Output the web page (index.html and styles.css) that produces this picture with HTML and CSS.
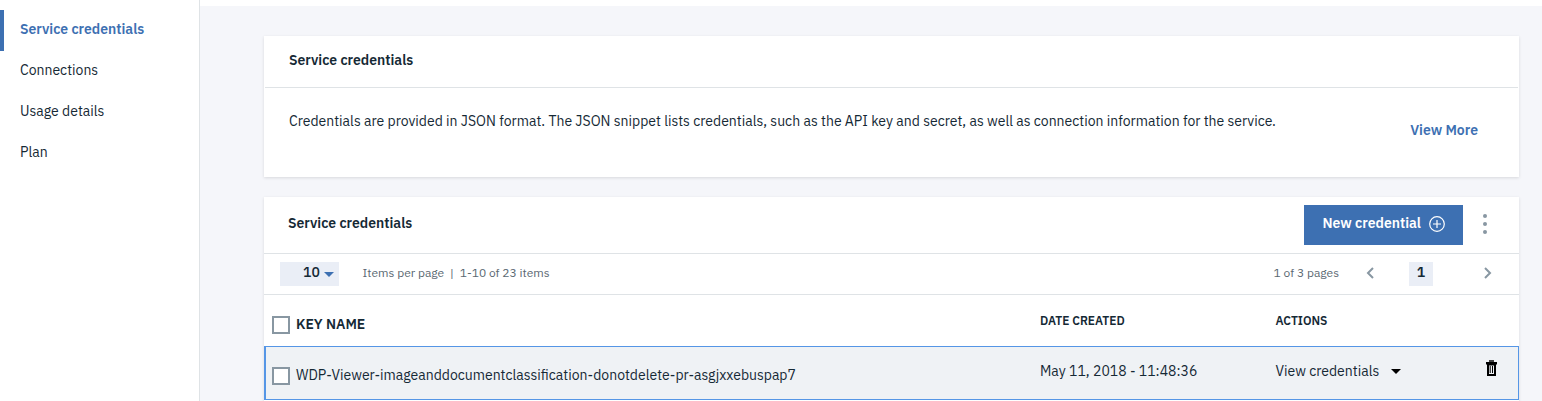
FILE: index.html
```
<!DOCTYPE html>
<html lang="en">
<head>
<meta charset="utf-8">
<title>Service credentials</title>
<link rel="stylesheet" href="styles.css">
</head>
<body>
<nav class="sidebar">
  <a class="nav-item active">Service credentials</a>
  <a class="nav-item">Connections</a>
  <a class="nav-item">Usage details</a>
  <a class="nav-item">Plan</a>
</nav>
<main class="main">
  <section class="card intro">
    <header class="intro-head"><h2 class="title">Service credentials</h2></header>
    <div class="intro-body">
      <p class="desc">Credentials are provided in JSON format. The JSON snippet lists credentials, such as the API key and secret, as well as connection information for the service.</p>
      <a class="more">View More</a>
    </div>
  </section>
  <section class="card list">
    <header class="toolbar">
      <h2 class="title">Service credentials</h2>
      <button class="primary"><span>New credential</span>
        <svg width="16" height="16" viewBox="0 0 16 16" fill="none" stroke="#fff" stroke-width="1.2"><circle cx="8" cy="8" r="7.3"/><path d="M8 4v8M4 8h8"/></svg>
      </button>
      <svg class="overflow" width="4" height="20" viewBox="0 0 4 20" fill="#8897a2"><circle cx="2" cy="2" r="2"/><circle cx="2" cy="10" r="2"/><circle cx="2" cy="18" r="2"/></svg>
    </header>
    <div class="pager">
      <div class="size"><span>10</span><svg width="10" height="5" viewBox="0 0 10 5"><path d="M0 0h10L5 5z" fill="#3d70b2"/></svg></div>
      <span class="small ipp">Items per page</span><span class="small bar">|</span><span class="small">1-10 of 23 items</span>
      <span class="small pages">1 of 3 pages</span>
      <svg class="prev" width="8" height="12" viewBox="0 0 8 12" fill="none" stroke="#8897a2" stroke-width="2"><path d="M7 1L2 6l5 5"/></svg>
      <span class="page">1</span>
      <svg class="next" width="8" height="12" viewBox="0 0 8 12" fill="none" stroke="#8897a2" stroke-width="2"><path d="M1 1l5 5-5 5"/></svg>
    </div>
    <div class="row head">
      <div class="name"><span class="check"></span><span class="label">KEY NAME</span></div>
      <span class="col">DATE CREATED</span>
      <span class="col">ACTIONS</span>
    </div>
    <div class="row item">
      <div class="name"><span class="check"></span><span class="label">WDP-Viewer-imageanddocumentclassification-donotdelete-pr-asgjxxebuspap7</span></div>
      <span class="cell">May 11, 2018 - 11:48:36</span>
      <div class="cell actions"><span>View credentials</span><svg width="10" height="5" viewBox="0 0 10 5"><path d="M0 0h10L5 5z"/></svg></div>
      <svg class="trash" width="12" height="16" viewBox="0 0 12 16"><path d="M3 0h5v2H3z" fill="#444"/><path d="M0 2h11v2.500H0z"/><path d="M1 4h9v12H1zM3 5.500v8.500h5V5.500z" fill-rule="evenodd"/><path d="M3.700 6h1v7h-1zM6 6h1v7H6z"/></svg>
    </div>
  </section>
</main>
</body>
</html>
```
FILE: styles.css
```
* { box-sizing: border-box; }
body { margin: 0; height: 401px; overflow: hidden; display: flex; background: #fff; color: #152935; font: 14px/20px "IBM Plex Sans", Roboto, sans-serif; white-space: nowrap; }
svg { display: block; flex: none; }
.sidebar { width: 200px; flex: none; padding-top: 10px; border-right: 1px solid #dfe3e6; }
.nav-item { display: flex; align-items: center; height: 41px; padding-left: 20px; padding-bottom: 3px; }
.nav-item.active { padding-left: 16px; border-left: 4px solid #3d70b2; color: #3d70b2; font-weight: 600; }
.main { flex: 1; min-width: 0; margin-top: 6px; padding: 30px 23px 0 64px; background: #f5f6fa; }
.card { background: #fff; box-shadow: 0 1px 3px rgba(0,0,0,.12); }
.title { margin: 0; font-size: 14px; font-weight: 600; line-height: 20px; }
.intro { height: 141px; margin-bottom: 20px; padding: 0 1px; }
.intro-head { height: 52px; padding: 14px 24px 0; border-bottom: 1px solid #dfe3e6; }
.intro-body { display: flex; justify-content: space-between; padding: 23px 40px 0 24px; }
.desc { margin: 0; }
.more { margin-top: 9px; color: #3d70b2; font-weight: 600; }
.list { height: 210px; }
.toolbar { display: flex; height: 57px; padding: 8px 32px 8px 24px; border-bottom: 1px solid #dfe3e6; }
.toolbar .title { margin: 8px auto 0 0; }
.primary { display: flex; align-items: center; gap: 8px; width: 159px; height: 40px; margin: 0 20px 0 0; padding: 0 0 4px 18.500px; border: 0; background: #3d70b2; color: #fff; font: inherit; font-weight: 600; }
.primary svg { margin-top: 1px; }
.overflow { margin-top: 9px; }
.pager { display: flex; height: 41px; padding: 8px 27px 0 16px; border-bottom: 1px solid #dfe3e6; }
.size { display: flex; width: 59px; height: 24px; padding-left: 23px; gap: 4px; background: #eaeef6; font-weight: 500; }
.size svg { margin-top: 9.500px; }
.small { font-size: 12px; line-height: 22px; color: #5a6872; }
.ipp { margin-left: 23.500px; }
.bar { width: 15.500px; text-align: center; }
.pages { margin-left: auto; }
.prev { margin: 5px 35.500px 0 26.500px; }
.page { width: 24px; height: 24px; background: #eaeef6; text-align: center; font-weight: 600; }
.next { margin: 5px 0 0 51px; }
.row { display: grid; grid-template-columns: 776px 235.500px 1fr; }
.name { display: flex; gap: 6px; padding-left: 8px; }
.check { width: 18px; height: 18px; border: 2px solid #8897a2; background: #fff; }
.head { height: 51px; padding-top: 21px; font-weight: 600; }
.label { margin-top: -1px; line-height: 18px; }
.col { margin-top: -1px; font-size: 12px; line-height: 12px; }
.item { grid-template-columns: 774px 235.500px 210.500px 1fr; height: 54px; border: 1px solid #5596e6; border-left-width: 2px; background: #eff2f5; }
.item .name { padding: 20px 0 0 6px; }
.cell { padding-top: 14px; }
.actions { display: flex; gap: 12px; }
.actions svg { margin-top: 8px; }
.trash { margin-top: 13px; }
```
